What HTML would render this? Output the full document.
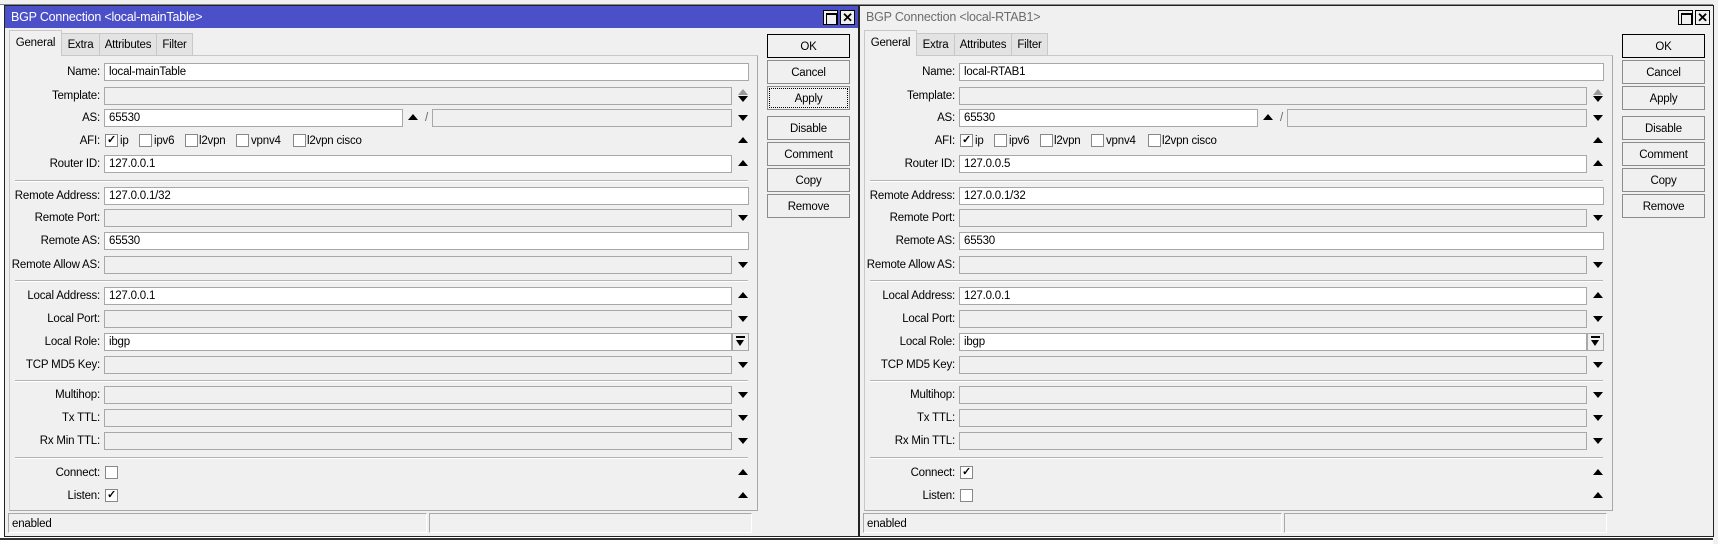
<!DOCTYPE html>
<html><head><meta charset="utf-8"><style>
*{box-sizing:border-box;margin:0;padding:0}
body{width:1718px;height:544px;overflow:hidden;background:#fff;font-family:"Liberation Sans",sans-serif;font-size:11.5px;letter-spacing:-0.2px;color:#000;position:relative}
.w{position:absolute;top:0;left:0;width:860px;height:544px}
.o{position:absolute;left:4px;top:5px;width:855px;height:532px;background:#f0f0f0;border:1px solid #222}
.t{position:absolute;left:5px;top:6px;width:853px;height:22px;background:#4b50c8;color:#fff;font-size:12.5px;padding:4px 0 0 6px}
.w2 .t{background:#f0f0f0;color:#6d6d6d}
.tb{position:absolute;top:10px;width:15px;height:15px;border:1px solid #000;background:#f0f0f0}
.tb.m::after{content:"";position:absolute;left:2px;top:2px;width:9px;height:9px;border:1px solid #000;border-top-width:2px}
.tb.x{font-weight:bold;font-size:13px;line-height:13px;text-align:center}
.tab{position:absolute;top:33px;height:22px;border:1px solid #c8c8c8;border-bottom:none;background:#e3e3e3;padding:5px 0 0 0;text-align:center}
.tab.a{top:30px;height:26px;background:#f0f0f0;padding-top:6px;z-index:2}
.g{position:absolute;left:9px;top:55px;width:749px;height:456px;border:1px solid #c8c8c8;border-right-color:#a8a8a8;border-bottom-color:#a8a8a8}
.l{position:absolute;width:96px;left:4px;text-align:right;white-space:nowrap;margin-top:1px}
.ct{position:absolute;white-space:nowrap;margin-top:1px}
.f{position:absolute;left:104px;height:18px;border:1px solid #a8a8a8;background:#fff;padding:2px 0 0 4px;white-space:nowrap}
.f.d{background:#f0f0f0}
.wide{width:645px}.sh{width:628px}
.up,.dn{position:absolute;left:738px;width:0;height:0;border-left:5px solid transparent;border-right:5px solid transparent}
.up{border-bottom:6px solid #000}
.dn{border-top:6px solid #000}
.up.gr{border-bottom-color:#999}
.sep{position:absolute;left:15px;width:733px;height:1px;background:#b4b4b4;box-shadow:0 1px 0 #fff}
.cb{position:absolute;width:13px;height:13px;border:1px solid #888;background:#fff;font-size:11px;line-height:11px;text-align:center;font-weight:bold}
.b{position:absolute;left:767px;width:83px;height:24px;border:1px solid #8c8c8c;background:#f0f0f0;text-align:center;padding-top:6px}
.b.ok{border:1px solid #000}
.b.ap{outline:1px dotted #000;outline-offset:-3px}
.sb{position:absolute;top:513px;height:20px;border:1px solid #a8a8a8;border-right-color:#fff;border-bottom-color:#fff;padding:4px 0 0 3px}
.bx{position:absolute;left:732px;width:17px;height:18px;border:1px solid #a8a8a8;background:#f0f0f0}
.bx::before{content:"";position:absolute;left:3px;top:2px;width:9px;height:2px;background:#000}
.bx::after{content:"";position:absolute;left:3px;top:6px;border-left:4.5px solid transparent;border-right:4.5px solid transparent;border-top:6px solid #000}
</style></head><body>
<div style="position:absolute;left:0;top:0;width:1718px;height:5px;background:#f0f0f0;border-bottom:1px solid #888"></div>
<div style="position:absolute;left:0;top:538px;width:1718px;height:6px;border-top:2px solid #333;background:#fff"></div>
<div style="position:absolute;left:1713px;top:0;width:5px;height:544px;background:#f0f0f0"></div>

<div class="w">
<div class="o"></div>
<div class="t">BGP Connection &lt;local-mainTable&gt;</div>
<div class="tb m" style="left:823px"></div><div class="tb x" style="left:840px">✕</div>
<div class="tab a" style="left:9px;width:53px">General</div>
<div class="tab" style="left:61px;width:39px">Extra</div>
<div class="tab" style="left:99px;width:58px">Attributes</div>
<div class="tab" style="left:156px;width:37px">Filter</div>
<div class="g"></div>
<div class="l" style="top:65px">Name:</div><div class="f wide" style="top:63px">local-mainTable</div>
<div class="l" style="top:89px">Template:</div><div class="f d sh" style="top:87px"></div><div class="up gr" style="top:89px"></div><div class="dn" style="top:96px"></div>
<div class="l" style="top:111px">AS:</div><div class="f" style="top:109px;width:299px">65530</div><div class="up" style="top:114px;left:408px"></div><div class="ct" style="left:425px;top:111px;color:#666">/</div><div class="f d" style="top:109px;left:432px;width:300px"></div><div class="dn" style="top:115px"></div>
<div class="l" style="top:134px">AFI:</div>
<div class="cb" style="left:105px;top:134px">✓</div><div class="ct" style="left:120px;top:134px">ip</div>
<div class="cb" style="left:139px;top:134px"></div><div class="ct" style="left:154px;top:134px">ipv6</div>
<div class="cb" style="left:185px;top:134px"></div><div class="ct" style="left:199px;top:134px">l2vpn</div>
<div class="cb" style="left:236px;top:134px"></div><div class="ct" style="left:251px;top:134px">vpnv4</div>
<div class="cb" style="left:293px;top:134px"></div><div class="ct" style="left:307px;top:134px">l2vpn cisco</div>
<div class="up" style="top:137px"></div>
<div class="l" style="top:157px">Router ID:</div><div class="f sh" style="top:155px">127.0.0.1</div><div class="up" style="top:160px"></div>
<div class="sep" style="top:180px"></div>
<div class="l" style="top:189px">Remote Address:</div><div class="f wide" style="top:187px">127.0.0.1/32</div>
<div class="l" style="top:211px">Remote Port:</div><div class="f d sh" style="top:209px"></div><div class="dn" style="top:215px"></div>
<div class="l" style="top:234px">Remote AS:</div><div class="f wide" style="top:232px">65530</div>
<div class="l" style="top:258px">Remote Allow AS:</div><div class="f d sh" style="top:256px"></div><div class="dn" style="top:262px"></div>
<div class="sep" style="top:280px"></div>
<div class="l" style="top:289px">Local Address:</div><div class="f sh" style="top:287px">127.0.0.1</div><div class="up" style="top:292px"></div>
<div class="l" style="top:312px">Local Port:</div><div class="f d sh" style="top:310px"></div><div class="dn" style="top:316px"></div>
<div class="l" style="top:335px">Local Role:</div><div class="f sh" style="top:333px">ibgp</div><div class="bx" style="top:333px"></div>
<div class="l" style="top:358px">TCP MD5 Key:</div><div class="f d sh" style="top:356px"></div><div class="dn" style="top:362px"></div>
<div class="sep" style="top:380px"></div>
<div class="l" style="top:388px">Multihop:</div><div class="f d sh" style="top:386px"></div><div class="dn" style="top:392px"></div>
<div class="l" style="top:411px">Tx TTL:</div><div class="f d sh" style="top:409px"></div><div class="dn" style="top:415px"></div>
<div class="l" style="top:434px">Rx Min TTL:</div><div class="f d sh" style="top:432px"></div><div class="dn" style="top:438px"></div>
<div class="sep" style="top:457px"></div>
<div class="l" style="top:466px">Connect:</div><div class="cb" style="left:105px;top:466px"></div><div class="up" style="top:469px"></div>
<div class="l" style="top:489px">Listen:</div><div class="cb" style="left:105px;top:489px">✓</div><div class="up" style="top:492px"></div>
<div class="b ok" style="top:34px">OK</div>
<div class="b" style="top:60px">Cancel</div>
<div class="b ap" style="top:86px">Apply</div>
<div class="b" style="top:116px">Disable</div>
<div class="b" style="top:142px">Comment</div>
<div class="b" style="top:168px">Copy</div>
<div class="b" style="top:194px">Remove</div>
<div class="sb" style="left:8px;width:419px">enabled</div>
<div class="sb" style="left:429px;width:323px"></div>
</div>

<div class="w w2" style="left:855px">
<div class="o"></div>
<div class="t">BGP Connection &lt;local-RTAB1&gt;</div>
<div class="tb m" style="left:823px"></div><div class="tb x" style="left:840px">✕</div>
<div class="tab a" style="left:9px;width:53px">General</div>
<div class="tab" style="left:61px;width:39px">Extra</div>
<div class="tab" style="left:99px;width:58px">Attributes</div>
<div class="tab" style="left:156px;width:37px">Filter</div>
<div class="g"></div>
<div class="l" style="top:65px">Name:</div><div class="f wide" style="top:63px">local-RTAB1</div>
<div class="l" style="top:89px">Template:</div><div class="f d sh" style="top:87px"></div><div class="up gr" style="top:89px"></div><div class="dn" style="top:96px"></div>
<div class="l" style="top:111px">AS:</div><div class="f" style="top:109px;width:299px">65530</div><div class="up" style="top:114px;left:408px"></div><div class="ct" style="left:425px;top:111px;color:#666">/</div><div class="f d" style="top:109px;left:432px;width:300px"></div><div class="dn" style="top:115px"></div>
<div class="l" style="top:134px">AFI:</div>
<div class="cb" style="left:105px;top:134px">✓</div><div class="ct" style="left:120px;top:134px">ip</div>
<div class="cb" style="left:139px;top:134px"></div><div class="ct" style="left:154px;top:134px">ipv6</div>
<div class="cb" style="left:185px;top:134px"></div><div class="ct" style="left:199px;top:134px">l2vpn</div>
<div class="cb" style="left:236px;top:134px"></div><div class="ct" style="left:251px;top:134px">vpnv4</div>
<div class="cb" style="left:293px;top:134px"></div><div class="ct" style="left:307px;top:134px">l2vpn cisco</div>
<div class="up" style="top:137px"></div>
<div class="l" style="top:157px">Router ID:</div><div class="f sh" style="top:155px">127.0.0.5</div><div class="up" style="top:160px"></div>
<div class="sep" style="top:180px"></div>
<div class="l" style="top:189px">Remote Address:</div><div class="f wide" style="top:187px">127.0.0.1/32</div>
<div class="l" style="top:211px">Remote Port:</div><div class="f d sh" style="top:209px"></div><div class="dn" style="top:215px"></div>
<div class="l" style="top:234px">Remote AS:</div><div class="f wide" style="top:232px">65530</div>
<div class="l" style="top:258px">Remote Allow AS:</div><div class="f d sh" style="top:256px"></div><div class="dn" style="top:262px"></div>
<div class="sep" style="top:280px"></div>
<div class="l" style="top:289px">Local Address:</div><div class="f sh" style="top:287px">127.0.0.1</div><div class="up" style="top:292px"></div>
<div class="l" style="top:312px">Local Port:</div><div class="f d sh" style="top:310px"></div><div class="dn" style="top:316px"></div>
<div class="l" style="top:335px">Local Role:</div><div class="f sh" style="top:333px">ibgp</div><div class="bx" style="top:333px"></div>
<div class="l" style="top:358px">TCP MD5 Key:</div><div class="f d sh" style="top:356px"></div><div class="dn" style="top:362px"></div>
<div class="sep" style="top:380px"></div>
<div class="l" style="top:388px">Multihop:</div><div class="f d sh" style="top:386px"></div><div class="dn" style="top:392px"></div>
<div class="l" style="top:411px">Tx TTL:</div><div class="f d sh" style="top:409px"></div><div class="dn" style="top:415px"></div>
<div class="l" style="top:434px">Rx Min TTL:</div><div class="f d sh" style="top:432px"></div><div class="dn" style="top:438px"></div>
<div class="sep" style="top:457px"></div>
<div class="l" style="top:466px">Connect:</div><div class="cb" style="left:105px;top:466px">✓</div><div class="up" style="top:469px"></div>
<div class="l" style="top:489px">Listen:</div><div class="cb" style="left:105px;top:489px"></div><div class="up" style="top:492px"></div>
<div class="b ok" style="top:34px">OK</div>
<div class="b" style="top:60px">Cancel</div>
<div class="b" style="top:86px">Apply</div>
<div class="b" style="top:116px">Disable</div>
<div class="b" style="top:142px">Comment</div>
<div class="b" style="top:168px">Copy</div>
<div class="b" style="top:194px">Remove</div>
<div class="sb" style="left:8px;width:419px">enabled</div>
<div class="sb" style="left:429px;width:323px"></div>
</div>
</body></html>
